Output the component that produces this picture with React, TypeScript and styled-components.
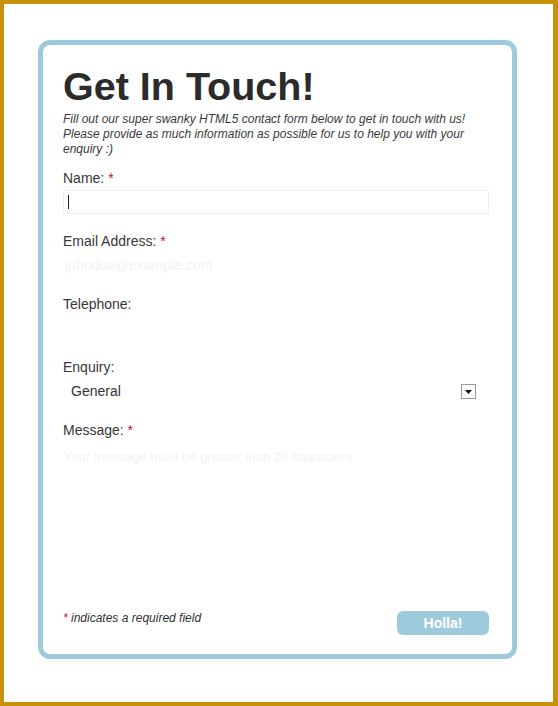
import React from "react";
import styled, { createGlobalStyle } from "styled-components";

const Global = createGlobalStyle`
  html, body { margin: 0; padding: 0; background: #ffffff; }
  * { box-sizing: border-box; }
  body { font-family: "Liberation Sans", Arial, sans-serif; }
`;

const Frame = styled.div`
  width: 558px;
  height: 706px;
  border-style: solid;
  border-color: #c8910a;
  border-width: 4px 5px 4px 4px;
  background: #ffffff;
  padding: 36px 0 0 34px;
`;

const Card = styled.form`
  width: 479px;
  height: 619px;
  border: 5px solid #9ecbdb;
  border-radius: 12px;
  padding: 22px 23px 19px 20px;
  display: flex;
  flex-direction: column;
`;

const Title = styled.h1`
  margin: 0;
  font-size: 39.5px;
  line-height: 39px;
  font-weight: bold;
  color: #2b2b2b;
`;

const Intro = styled.p`
  margin: 6px 0 0;
  font-size: 12px;
  line-height: 15px;
  font-style: italic;
  color: #3a3a3a;
  width: 420px;
`;

const Field = styled.div<{ $first?: boolean }>`
  display: flex;
  flex-direction: column;
  margin-top: ${(p) => (p.$first ? "12px" : "18px")};
`;

const Label = styled.label`
  font-size: 14px;
  line-height: 18px;
  color: #383838;
`;

const Req = styled.span`
  color: #b3143f;
`;

const InputWrap = styled.div`
  position: relative;
  margin-top: 3px;
`;

const TextInput = styled.input<{ $outlined?: boolean }>`
  display: block;
  width: 426px;
  height: 24px;
  border: 1px solid ${(p) => (p.$outlined ? "#eaf2f4" : "transparent")};
  padding: 0 1px;
  font-family: inherit;
  font-size: 14px;
  color: #333;
  background: transparent;
  outline: none;
  &::placeholder { color: #f3f3f3; }
`;

const Caret = styled.span`
  position: absolute;
  left: 5px;
  top: 5px;
  width: 1px;
  height: 14px;
  background: #222;
`;

const Select = styled.select`
  display: block;
  width: 413px;
  height: 24px;
  border: none;
  appearance: none;
  -webkit-appearance: none;
  background: transparent;
  padding: 0 0 0 8px;
  font-family: inherit;
  font-size: 14px;
  color: #333;
  outline: none;
`;

const Arrow = styled.span`
  position: absolute;
  left: 398px;
  top: 5px;
  width: 15px;
  height: 15px;
  border: 1px solid #9a9a9a;
  background: #fbfbfb;
  display: flex;
  align-items: center;
  justify-content: center;
  pointer-events: none;
`;

const TextArea = styled.textarea`
  display: block;
  width: 426px;
  height: 150px;
  border: none;
  resize: none;
  padding: 7px 1px;
  font-family: inherit;
  font-size: 13px;
  color: #333;
  background: transparent;
  outline: none;
  &::placeholder { color: #f3f3f3; }
`;

const Footer = styled.div`
  margin-top: auto;
  display: flex;
  justify-content: space-between;
  align-items: flex-start;
`;

const Note = styled.p`
  margin: 0;
  font-size: 12px;
  line-height: 15px;
  font-style: italic;
  color: #333;
`;

const Button = styled.button`
  width: 92px;
  height: 24px;
  border: none;
  border-radius: 6px;
  background: #9ecbdb;
  color: #ffffff;
  font-family: inherit;
  font-size: 14px;
  font-weight: bold;
  padding: 0;
  cursor: pointer;
`;

export default function App() {
  return (
    <>
      <Global />
      <Frame>
        <Card onSubmit={(e) => e.preventDefault()}>
          <Title>Get In Touch!</Title>
          <Intro>
            Fill out our super swanky HTML5 contact form below to get in touch with us! Please
            provide as much information as possible for us to help you with your enquiry :)
          </Intro>

          <Field $first>
            <Label htmlFor="name">
              Name: <Req>*</Req>
            </Label>
            <InputWrap>
              <TextInput id="name" $outlined />
              <Caret />
            </InputWrap>
          </Field>

          <Field>
            <Label htmlFor="email">
              Email Address: <Req>*</Req>
            </Label>
            <InputWrap>
              <TextInput id="email" placeholder="johndoe@example.com" />
            </InputWrap>
          </Field>

          <Field>
            <Label htmlFor="tel">Telephone:</Label>
            <InputWrap>
              <TextInput id="tel" />
            </InputWrap>
          </Field>

          <Field>
            <Label htmlFor="enquiry">Enquiry:</Label>
            <InputWrap>
              <Select id="enquiry" defaultValue="General">
                <option>General</option>
                <option>Sales</option>
                <option>Support</option>
              </Select>
              <Arrow>
                <svg width="7" height="4" viewBox="0 0 7 4">
                  <path d="M0 0 H7 L3.5 4 Z" fill="#111" />
                </svg>
              </Arrow>
            </InputWrap>
          </Field>

          <Field>
            <Label htmlFor="message">
              Message: <Req>*</Req>
            </Label>
            <InputWrap>
              <TextArea
                id="message"
                placeholder="Your message must be greater than 20 characters"
              />
            </InputWrap>
          </Field>

          <Footer>
            <Note>
              <Req>*</Req> indicates a required field
            </Note>
            <Button type="submit">Holla!</Button>
          </Footer>
        </Card>
      </Frame>
    </>
  );
}
